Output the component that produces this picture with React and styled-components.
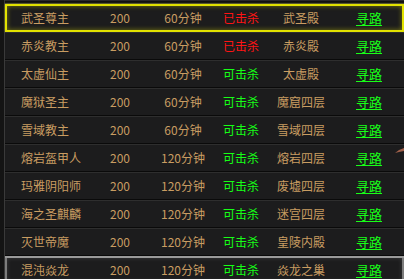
import styled, { createGlobalStyle, css } from 'styled-components';

const GlobalStyle = createGlobalStyle`
  html, body {
    margin: 0;
    padding: 0;
    background: #1a1a1a;
    overflow: hidden;
  }
`;

const Page = styled.div`
  position: relative;
  width: 404px;
  height: 279px;
  overflow: hidden;
  display: flex;
  background: #1a1a1a;
  font-family: "Noto Sans CJK SC", "Liberation Sans", sans-serif;
  font-size: 12px;
`;

const Rail = styled.div`
  width: 4px;
  flex: none;
  background: #141414;
  border-right: 1px solid #3a3a3a;
`;

const Table = styled.div`
  flex: 1;
  display: flex;
  flex-direction: column;
`;

const TopEdge = styled.div`
  height: 4px;
  flex: none;
  border-top: 1px solid #2a2a2a;
  border-bottom: 1px solid #3c3c3c;
  box-sizing: border-box;
  background: #121212;
`;

const Row = styled.div`
  position: relative;
  height: 28px;
  flex: none;
  box-sizing: border-box;
  display: grid;
  grid-template-columns: 90px 50px 76px 40px 80px 56px 1fr;
  align-items: center;
  background: #1c1c1d;
  border-bottom: 1px solid #0a0a0a;
  box-shadow: inset 0 1px 0 #2e2e2e;
  color: #c99d62;
  ${(p) =>
    p.$mark === 'gold' &&
    css`
      border-bottom: none;
      box-shadow: inset 0 0 0 2px #e2e200, inset 0 0 5px 2px rgba(230, 230, 0, 0.45),
        0 0 2px rgba(230, 230, 0, 0.5);
    `}
  ${(p) =>
    p.$mark === 'silver' &&
    css`
      box-shadow: inset 0 2px 0 #9a9a9a, inset 0 0 0 2px #7d7d7d,
        inset 0 0 4px 2px rgba(200, 200, 200, 0.2);
    `}
`;

const Cell = styled.div`
  text-align: center;
  white-space: nowrap;
  line-height: 14px;
`;

const NameCell = styled(Cell)`
  text-align: left;
  padding-left: 16px;
`;

const StatusCell = styled(Cell)`
  color: ${(p) => (p.$dead ? '#ff1414' : '#16ff16')};
`;

const RouteLink = styled.a`
  color: #18ff18;
  font-size: 13px;
  text-decoration: underline;
  text-underline-offset: 2px;
  cursor: pointer;
`;

const Marker = styled.svg`
  position: absolute;
  right: 0;
  top: 146px;
`;

const bosses = [
  ['武圣尊主', '200', '60分钟', true, '武圣殿'],
  ['赤炎教主', '200', '60分钟', true, '赤炎殿'],
  ['太虚仙主', '200', '60分钟', false, '太虚殿'],
  ['魔狱圣主', '200', '60分钟', false, '魔窟四层'],
  ['雪域教主', '200', '60分钟', false, '雪域四层'],
  ['熔岩盔甲人', '200', '120分钟', false, '熔岩四层'],
  ['玛雅阴阳师', '200', '120分钟', false, '废墟四层'],
  ['海之圣麒麟', '200', '120分钟', false, '迷宫四层'],
  ['灭世帝魔', '200', '120分钟', false, '皇陵内殿'],
  ['混沌焱龙', '200', '120分钟', false, '焱龙之巢'],
];

export default function App() {
  return (
    <Page>
      <GlobalStyle />
      <Rail />
      <Table>
        <TopEdge />
        {bosses.map(([name, level, respawn, dead, place], i) => {
          const mark = i === 0 ? 'gold' : i === bosses.length - 1 ? 'silver' : undefined;
          return (
            <Row key={name} $mark={mark}>
              <NameCell>{name}</NameCell>
              <Cell>{level}</Cell>
              <Cell>{respawn}</Cell>
              <StatusCell $dead={dead}>{dead ? '已击杀' : '可击杀'}</StatusCell>
              <Cell>{place}</Cell>
              <Cell>
                <RouteLink>寻路</RouteLink>
              </Cell>
              <span />
            </Row>
          );
        })}
      </Table>
      <Marker width="9" height="8" viewBox="0 0 9 8">
        <path d="M0 7 L4 4 L9 2 L9 5 L4 6 Z" fill="#a0604a" />
      </Marker>
    </Page>
  );
}
